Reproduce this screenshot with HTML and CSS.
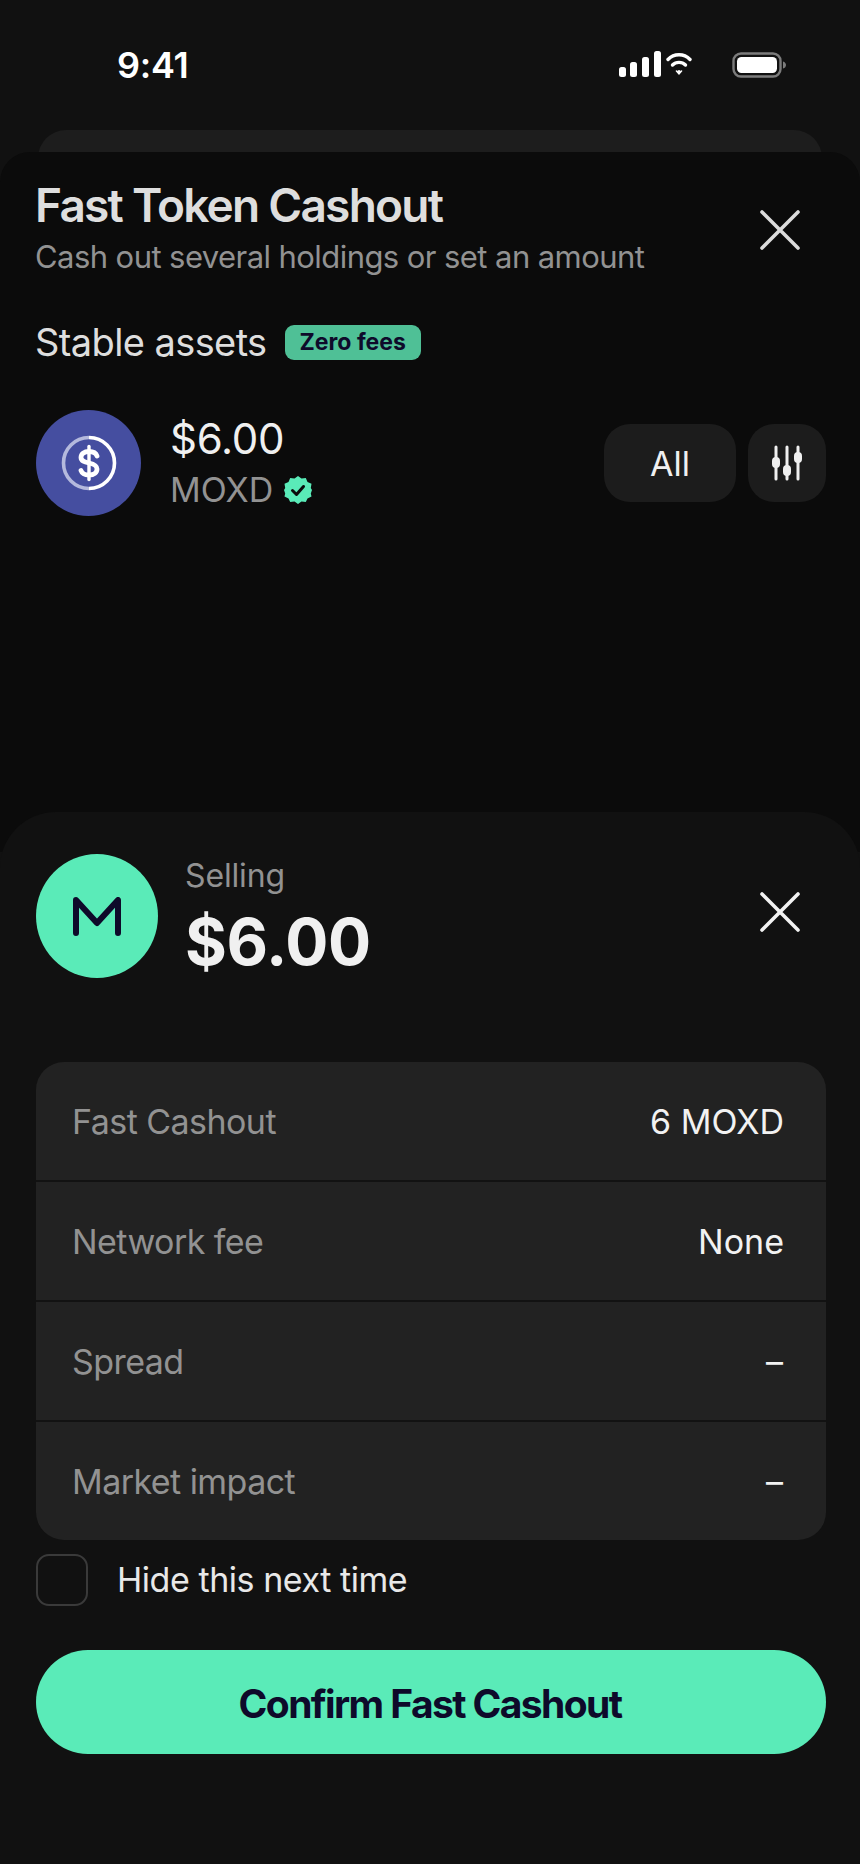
FILE: index.html

```html
<!DOCTYPE html>
<html lang="en">

<head>
    <meta charset="UTF-8">
    <meta name="viewport" content="width=device-width, initial-scale=1.0">
    <title>Fast Token Cashout</title>
    <link rel="stylesheet" href="styles.css">
</head>

<body>
    <div class="status-bar">
        <span class="clock">9:41</span>
        <div class="status-icons">
            <svg class="signal" width="42" height="26" viewBox="0 0 42 26" fill="#fff">
                <rect x="0" y="16" width="7" height="10" rx="2.5"/>
                <rect x="11" y="11" width="7" height="15" rx="2.5"/>
                <rect x="23" y="6" width="7" height="20" rx="2.5"/>
                <rect x="35" y="0" width="7" height="26" rx="2.5"/>
            </svg>
            <svg class="wifi" width="26" height="24" viewBox="0 0 26 24" fill="none" stroke="#fff" stroke-width="3.4" stroke-linecap="round">
                <path d="M2 8.5C8 2.2 18 2.2 24 8.5"/>
                <path d="M6.5 14C10 10.5 16 10.5 19.5 14"/>
                <circle cx="13" cy="20.5" r="1.6" fill="#fff" stroke="none"/>
                <path d="M10.5 20L13 22.8L15.5 20" stroke-width="1.6"/>
            </svg>
            <svg class="battery" width="54" height="26" viewBox="0 0 54 26">
                <rect x="1.5" y="1.5" width="47" height="23" rx="7.5" fill="none" stroke="#7c7c7c" stroke-width="2.4"/>
                <rect x="5" y="5" width="40" height="16" rx="4.5" fill="#fff"/>
                <path d="M51 9.5C53 10 54 11.5 54 13C54 14.5 53 16 51 16.5Z" fill="#7c7c7c"/>
            </svg>
        </div>
    </div>

    <div class="peek-card"></div>

    <section class="sheet sheet-back">
        <div class="sheet-head">
            <div>
                <h1 class="title">Fast Token Cashout</h1>
                <p class="subtitle">Cash out several holdings or set an amount</p>
            </div>
            <button class="close close-dim" aria-label="Close">
                <svg width="42" height="42" viewBox="0 0 42 42" fill="none" stroke="currentColor" stroke-width="3.6" stroke-linecap="round">
                    <path d="M3 3L39 39M39 3L3 39"/>
                </svg>
            </button>
        </div>

        <div class="section-head">
            <h2 class="section-title">Stable assets</h2>
            <span class="pill">Zero fees</span>
        </div>

        <div class="asset">
            <div class="asset-logo">
                <svg width="58" height="58" viewBox="0 0 58 58" fill="none">
                    <path d="M29 3.5A25.5 25.5 0 0 1 29 54.5" stroke="#fff" stroke-width="3.6"/>
                    <path d="M29 54.5A25.5 25.5 0 0 1 29 3.5" stroke="#b4b9dd" stroke-width="3.6"/>
                    <path d="M37 22C36 19 33 17.5 29 17.5C24 17.5 21 20 21 23.5C21 27 24.5 28 29 29C33.5 30 37 31.5 37 35C37 38.5 34 41 29 41C25 41 22 39.5 21 36.5" stroke="#fff" stroke-width="4.8" stroke-linecap="round"/>
                    <path d="M29 12.5V45.5" stroke="#fff" stroke-width="3.4" stroke-linecap="round"/>
                </svg>
            </div>
            <div class="asset-info">
                <div class="asset-value">$6.00</div>
                <div class="asset-name">
                    MOXD
                    <svg class="verified" width="28" height="28" viewBox="0 0 28 28">
                        <path d="M14 0L17.5 2.6L21.8 2L23.5 6L27.5 7.8L26.8 12L28 14L26.8 17.5L27.5 20.5L23.5 22.5L21.8 26L17.5 25.6L14 28L10.5 25.6L6.2 26L4.5 22.5L.5 20.5L1.2 17.5L0 14L1.2 12L.5 7.8L4.5 6L6.2 2L10.5 2.6Z" fill="#5aebb8"/>
                        <path d="M8.5 14.5L12.5 18.5L19.5 10.5" fill="none" stroke="#0b0b0b" stroke-width="3" stroke-linecap="round" stroke-linejoin="round"/>
                    </svg>
                </div>
            </div>
            <div class="asset-actions">
                <button class="chip chip-all">All</button>
                <button class="chip chip-icon" aria-label="Adjust">
                    <svg width="32" height="36" viewBox="0 0 32 36" fill="#f0f0f0" stroke="#f0f0f0" stroke-linecap="round">
                        <path d="M5 2V34M16 2V34M27 2V34" stroke-width="3" fill="none"/>
                        <rect x="1" y="12" width="8" height="11" rx="4" stroke="none"/>
                        <rect x="12" y="20" width="8" height="11" rx="4" stroke="none"/>
                        <rect x="23" y="7" width="8" height="11" rx="4" stroke="none"/>
                    </svg>
                </button>
            </div>
        </div>
    </section>

    <section class="sheet sheet-front">
        <div class="selling">
            <div class="token-logo">
                <svg width="48" height="39" viewBox="0 0 48 39" fill="none" stroke="#0e0a2a" stroke-width="6" stroke-linecap="round" stroke-linejoin="round">
                    <path d="M3 36V3L24 26L45 3V36"/>
                </svg>
            </div>
            <div class="selling-info">
                <div class="selling-label">Selling</div>
                <div class="selling-value">$6.00</div>
            </div>
            <button class="close close-front" aria-label="Close">
                <svg width="42" height="42" viewBox="0 0 42 42" fill="none" stroke="currentColor" stroke-width="3.6" stroke-linecap="round">
                    <path d="M3 3L39 39M39 3L3 39"/>
                </svg>
            </button>
        </div>

        <div class="details">
            <div class="row"><span class="row-label">Fast Cashout</span><span class="row-value">6 MOXD</span></div>
            <div class="row"><span class="row-label">Network fee</span><span class="row-value">None</span></div>
            <div class="row"><span class="row-label">Spread</span><span class="row-value row-dash">–</span></div>
            <div class="row"><span class="row-label">Market impact</span><span class="row-value row-dash">–</span></div>
        </div>

        <label class="hide-next">
            <span class="checkbox"></span>
            <span class="hide-text">Hide this next time</span>
        </label>

        <button class="confirm">Confirm Fast Cashout</button>
    </section>
</body>

</html>
```

FILE: styles.css

```css
* {
    box-sizing: border-box;
}

html,
body {
    margin: 0;
    height: 1864px;
    overflow: hidden;
}

body {
    background-color: #111111;
    font-family: Inter, "Liberation Sans", sans-serif;
    color: #fff;
}

h1,
h2,
p {
    margin: 0;
}

button {
    font-family: inherit;
    border: none;
    padding: 0;
    background: none;
    color: inherit;
}

.status-bar {
    height: 130px;
    padding: 44px 74px 0 117px;
    display: flex;
    justify-content: space-between;
    align-items: flex-start;
}

.clock {
    font-size: 36px;
    line-height: 42px;
    font-weight: 600;
    letter-spacing: -0.3px;
}

.status-icons {
    display: flex;
    align-items: flex-start;
    padding-top: 7px;
}

.wifi {
    margin-left: 5px;
}

.battery {
    margin-left: 40px;
    margin-top: 1px;
}

.peek-card {
    height: 60px;
    margin: 0 38px -38px;
    background-color: #1d1d1d;
    border-radius: 28px 28px 0 0;
}

.sheet {
    position: relative;
    padding: 0 34px 0 36px;
}

.sheet-back {
    height: 700px;
    padding-top: 27px;
    margin-bottom: -40px;
    background-color: #0b0b0b;
    border-radius: 30px 30px 0 0;
}

.sheet-front {
    height: 1052px;
    padding-top: 42px;
    background-color: #111111;
    border-radius: 56px 56px 0 0;
}

.sheet-head {
    display: flex;
    justify-content: space-between;
    align-items: center;
}

.title {
    margin-left: -1px;
    font-size: 46px;
    line-height: 52px;
    font-weight: 600;
    letter-spacing: -1.75px;
    color: #dedede;
}

.subtitle {
    margin-top: 8px;
    margin-left: -1px;
    font-size: 31px;
    line-height: 36px;
    letter-spacing: -0.57px;
    color: #929292;
}

.close {
    display: flex;
    margin-right: 25px;
    color: #f2f2f2;
}

.close-dim {
    color: #dcdcdc;
    margin-top: 6px;
}

.close-front {
    margin-bottom: 8px;
}

.section-head {
    display: flex;
    align-items: center;
    gap: 18px;
    margin-top: 45px;
}

.section-title {
    margin-left: -1px;
    font-size: 38px;
    line-height: 44px;
    font-weight: 400;
    letter-spacing: -0.6px;
    color: #dedede;
}

.pill {
    padding: 0 15px;
    height: 35px;
    line-height: 35px;
    border-radius: 9px;
    background-color: #4fc096;
    color: #0e0a2a;
    font-size: 23px;
    font-weight: 700;
}

.asset {
    display: flex;
    align-items: center;
    margin-top: 46px;
}

.asset-logo {
    width: 105px;
    height: 106px;
    border-radius: 50%;
    background-color: #454ea0;
    display: flex;
    align-items: center;
    justify-content: center;
}

.asset-info {
    margin-left: 29px;
    padding-bottom: 2px;
    flex: 1;
}

.asset-value {
    margin-bottom: 2px;
    font-size: 42px;
    line-height: 54px;
    letter-spacing: -0.3px;
    color: #f0f0f0;
}

.asset-name {
    display: flex;
    align-items: center;
    gap: 11px;
    font-size: 34px;
    line-height: 44px;
    color: #929292;
}

.asset-actions {
    display: flex;
    gap: 12px;
}

.chip {
    height: 78px;
    border-radius: 26px;
    background-color: #1c1c1c;
    color: #f0f0f0;
    display: flex;
    align-items: center;
    justify-content: center;
}

.chip-all {
    width: 132px;
    font-size: 34px;
}

.chip-icon {
    width: 78px;
}

.selling {
    display: flex;
    align-items: center;
}

.token-logo {
    width: 122px;
    height: 124px;
    border-radius: 50%;
    background-color: #5aebb8;
    display: flex;
    align-items: center;
    justify-content: center;
}

.selling-info {
    flex: 1;
    margin-left: 27px;
    padding-top: 2px;
}

.selling-label {
    font-size: 32px;
    line-height: 40px;
    letter-spacing: -0.15px;
    color: #929292;
}

.selling-value {
    margin-top: 10px;
    font-size: 64px;
    line-height: 72px;
    font-weight: 700;
    letter-spacing: -0.3px;
    color: #f0f0f0;
}

.details {
    margin-top: 84px;
    border-radius: 28px;
    background-color: #222222;
}

.row {
    height: 120px;
    padding: 0 42px 0 36px;
    display: flex;
    justify-content: space-between;
    align-items: center;
    font-size: 34px;
    border-bottom: 2px solid #121212;
}

.row:last-child {
    height: 118px;
    border-bottom: none;
}

.row-label {
    letter-spacing: -0.55px;
    color: #929292;
}

.row-value {
    color: #f2f2f2;
}

.row-dash {
    margin-right: 1px;
}

.hide-next {
    display: flex;
    align-items: center;
    gap: 29px;
    margin-top: 14px;
    font-size: 34px;
    letter-spacing: -0.45px;
    color: #e8e8e8;
}

.hide-text {
    margin-bottom: 2px;
}

.checkbox {
    width: 52px;
    height: 52px;
    border-radius: 13px;
    border: 2px solid #3a3a3a;
}

.confirm {
    display: block;
    width: 100%;
    height: 104px;
    margin-top: 44px;
    padding: 3px 2px 0 0;
    border-radius: 52px;
    background-color: #5aebb8;
    color: #0e0a2a;
    font-size: 39px;
    font-weight: 700;
    letter-spacing: -1.6px;
}
```
